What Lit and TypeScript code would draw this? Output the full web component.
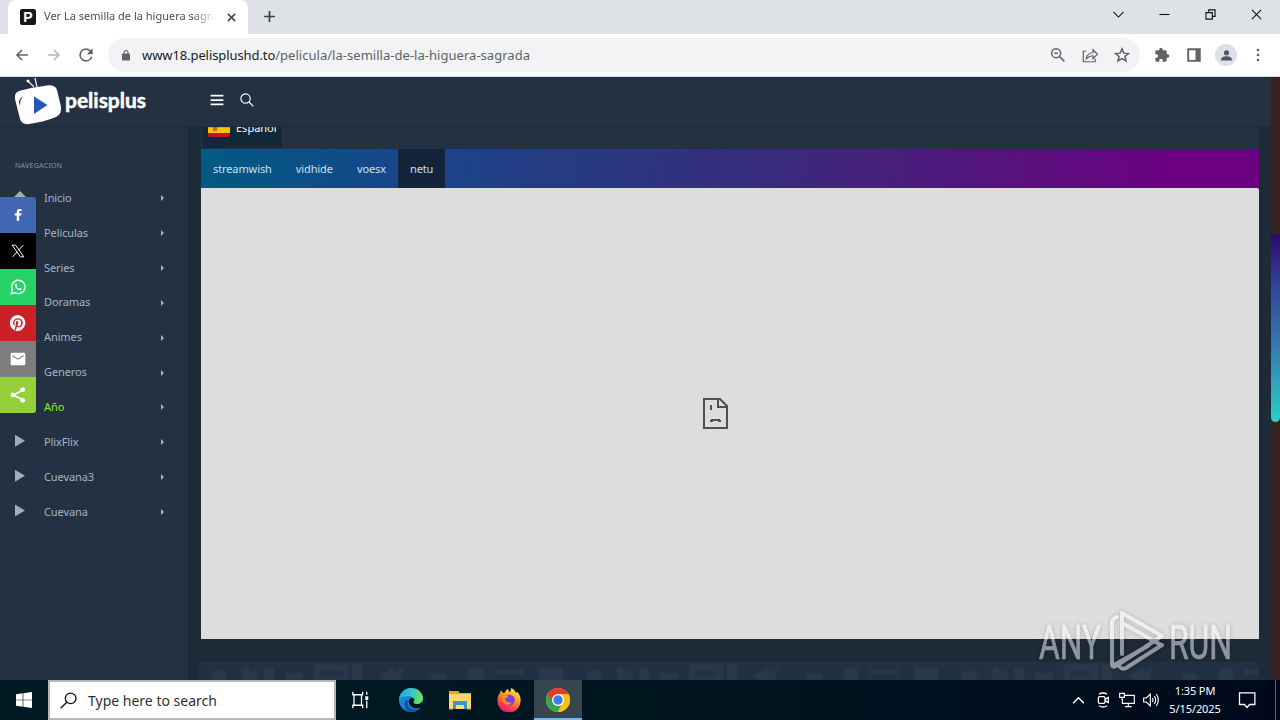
import { LitElement, css, html, svg } from 'lit';
import { customElement, property } from 'lit/decorators.js';
import { classMap } from 'lit/directives/class-map.js';

const ICONS = {
  back: svg`<path d="M21 12H5M12 4.500L4.500 12l7.500 7.500" fill="none" stroke="currentColor" stroke-width="2.300"/>`,
  forward: svg`<path d="M3 12h16M12 4.500l7.500 7.500-7.500 7.500" fill="none" stroke="currentColor" stroke-width="2.300"/>`,
  reload: svg`<path d="M17.650 6.350A7.950 7.950 0 0 0 12 4a8 8 0 1 0 7.730 10h-2.080A6 6 0 1 1 12 6c1.660 0 3.140.69 4.220 1.780L13 11h7V4z"/>`,
  lock: svg`<path d="M18 8h-1V6A5 5 0 0 0 7 6v2H6a2 2 0 0 0-2 2v10c0 1.100.9 2 2 2h12a2 2 0 0 0 2-2V10a2 2 0 0 0-2-2zM9 6a3 3 0 0 1 6 0v2H9z"/>`,
  close: svg`<path d="M4 4l16 16M20 4L4 20" fill="none" stroke="currentColor" stroke-width="3.400"/>`,
  plus: svg`<path d="M12 2v20M2 12h20" fill="none" stroke="currentColor" stroke-width="3.200"/>`,
  zoomOut: svg`<g fill="none" stroke="currentColor" stroke-width="2"><circle cx="9.500" cy="9.500" r="6"/><path d="M14 14l6.500 6.500M7 9.500h5"/></g>`,
  share: svg`<path d="M7 7H3v14h16v-4M7 17c1-6 4-8 9-8V5l6 6-6 6v-4c-4 0-6 1-9 4z" fill="none" stroke="currentColor" stroke-width="1.600"/>`,
  star: svg`<path d="M12 3.800l2.400 5.700 6.200.5-4.700 4 1.500 6L12 16.800 6.600 20l1.500-6-4.700-4 6.200-.5z" fill="none" stroke="currentColor" stroke-width="2"/>`,
  puzzle: svg`<path d="M20.500 11H19V7a2 2 0 0 0-2-2h-4V3.500a2.500 2.500 0 0 0-5 0V5H4a2 2 0 0 0-2 2v3.800h1.500a2.700 2.700 0 0 1 0 5.400H2V20c0 1.100.9 2 2 2h3.800v-1.500a2.700 2.700 0 0 1 5.400 0V22H17a2 2 0 0 0 2-2v-4h1.500a2.500 2.500 0 0 0 0-5z"/>`,
  panel: svg`<path d="M3 3h18v18H3zM5.500 5.500v13H14v-13z" fill-rule="evenodd"/>`,
  person: svg`<circle cx="12" cy="7" r="4.800"/><path d="M2 20c0-5 5-6.500 10-6.500s10 1.500 10 6.500v1H2z"/>`,
  dots: svg`<circle cx="12" cy="4.500" r="2"/><circle cx="12" cy="12" r="2"/><circle cx="12" cy="19.500" r="2"/>`,
  chevronDown: svg`<path d="M1 6.500l11 11 11-11" fill="none" stroke="currentColor" stroke-width="2.200"/>`,
  chevronUp: svg`<path d="M2 17l10-10 10 10" fill="none" stroke="currentColor" stroke-width="2.600"/>`,
  minimize: svg`<path d="M1 12h22" stroke="currentColor" stroke-width="2.400"/>`,
  restore: svg`<path d="M2 8h14v14H2zM8 8V2h14v14h-6" fill="none" stroke="currentColor" stroke-width="2.400"/>`,
  exit: svg`<path d="M2 2l20 20M22 2L2 22" fill="none" stroke="currentColor" stroke-width="2.400"/>`,
  menu: svg`<path d="M1 4.500h22M1 12h22M1 19.500h22" stroke="currentColor" stroke-width="3"/>`,
  search: svg`<g fill="none" stroke="currentColor" stroke-width="1.900"><circle cx="9.500" cy="9.500" r="8"/><path d="M15 15l8 8"/></g>`,
  find: svg`<g fill="none" stroke="currentColor" stroke-width="1.900"><circle cx="15" cy="9" r="7.500"/><path d="M9.500 14.500L1 23"/></g>`,
  facebook: svg`<path d="M14 22v-9h3.300l.6-3.800H14V7c0-1.300.5-2 2.100-2H18V1.700C17.300 1.600 16.300 1.500 15 1.500c-3.300 0-5.200 1.900-5.200 5.200v2.500H6.500V13h3.300v9z"/>`,
  x: svg`<path d="M2 2h5.800l14.200 20h-5.800zM21 2l-8.300 8.900M10.500 13.500L3 22" fill="none" stroke="currentColor" stroke-width="1.700"/>`,
  whatsapp: svg`<path d="M2 22l1.600-5.600A10 10 0 1 1 7.500 20.500z" fill="none" stroke="currentColor" stroke-width="2.100"/><path d="M8.400 6.800c-.7.300-1.600 1.300-1.300 2.900.5 3 4 6.700 7.500 7.200 1.500.2 2.700-.8 2.900-2.300l-2.800-1.500-1.300 1.400c-1.800-.7-3-1.900-3.800-3.600l1-1.200-1.200-2.900z"/>`,
  pinterest: svg`<path d="M12 0A12 12 0 0 0 7.600 23.200c-.1-1-.2-2.500 0-3.600l1.400-6s-.3-.7-.3-1.700c0-1.700 1-2.900 2.200-2.900 1 0 1.500.8 1.500 1.700 0 1.100-.7 2.600-1 4.100-.3 1.200.6 2.200 1.800 2.200 2.100 0 3.700-2.200 3.700-5.500 0-2.900-2-4.900-5-4.900-3.400 0-5.400 2.600-5.400 5.200 0 1 .4 2.100.9 2.700l-.3 1.500c-1.700-.8-2.500-2.600-2.500-4.300 0-3.500 2.500-6.800 7.500-6.800 4 0 7.100 2.900 7.100 6.600 0 4-2.500 7.200-6.100 7.200-1.200 0-2.300-.6-2.700-1.400l-.9 3c-.2 1-.9 2.400-1.400 3.300A12 12 0 1 0 12 0z"/>`,
  mail: svg`<path fill-rule="evenodd" d="M3 2.500h18a2 2 0 0 1 2 2v15a2 2 0 0 1-2 2H3a2 2 0 0 1-2-2v-15a2 2 0 0 1 2-2zM3.500 6v2L12 13.300 20.500 8V6L12 11.300z"/>`,
  shareNodes: svg`<path d="M19 5L5 12l14 7" fill="none" stroke="currentColor" stroke-width="2.400"/><circle cx="19" cy="4" r="3.600"/><circle cx="4.500" cy="12" r="3.600"/><circle cx="19" cy="20" r="3.600"/>`,
  windows: svg`<path d="M0 3.500L10 2v9.500H0zM11 1.900L24 0v11.500H11zM0 12.500h10V22L0 20.500zM11 12.500h13V24l-13-1.900z"/>`,
  taskView: svg`<path d="M2.500 1v4h13V1M2.500 23v-4h13v4M4 5v14M14 5v14M21 1v4M21 13v10" fill="none" stroke="currentColor" stroke-width="1.700"/><path d="M19 7h4v5h-4z"/>`,
  meet: svg`<g fill="none" stroke="currentColor" stroke-width="1.900"><rect x="5" y="7" width="10" height="10" rx="2"/><path d="M15 11l5-3v8l-5-3M6 3.500Q12-.5 18 3.500M6 20.500q6 4 12 0"/></g>`,
  network: svg`<g fill="none" stroke="currentColor" stroke-width="1.700"><path d="M9 5h14v12H5v-6M14 17v5M9 22h10M1 2h7v6H1zM4.500 8v4"/></g>`,
  volume: svg`<g fill="none" stroke="currentColor" stroke-width="1.700"><path d="M1 9h4l6-6v18l-6-6H1zM14 9q2 3 0 6M17 6q4 6 0 12M20 3q6 9 0 18"/></g>`,
  notice: svg`<path d="M2 2.500h20.500v15.500h-7l-3.500 4-3.500-4H2z" fill="none" stroke="currentColor" stroke-width="1.700"/>`,
  edge: svg`
    <defs>
      <linearGradient id="a" x1="0" y1="0" x2="1" y2="0.3"><stop offset="0" stop-color="#249fdc"/><stop offset=".55" stop-color="#35c5c9"/><stop offset="1" stop-color="#69dc61"/></linearGradient>
      <linearGradient id="b" x1="0" y1="0" x2="0" y2="1"><stop offset="0" stop-color="#1a8bdd"/><stop offset="1" stop-color="#1e7fd0"/></linearGradient>
    </defs>
    <circle cx="12" cy="12" r="12" fill="url(#b)"/>
    <path d="M9 12c-2 5 2 10 8 9.500 2-.2 4-1 5-2.500-2 4-6 5-10 5C6 24 4 17 7 12z" fill="#1452a0"/>
    <path d="M13 10c-4 0-4 5-1.500 8 3 3 8 3 11 .8L24 12z" fill="#001722"/>
    <path d="M0 11C1 4.500 6 0 12 0c7 0 12 5 12 10 0 4-3 6-6 6-2.500 0-4-1-3.500-2 2-2 .5-6-4-6C6 8 2 9 0 11z" fill="url(#a)"/>`,
  folder: svg`
    <path d="M1 3h9l2 2h11v3H1z" fill="#e9a321"/><path d="M1 6h22v15H1z" fill="#ffd76c"/>
    <path d="M5 13h14v8h-3v-4H8v4H5z" fill="#3a94d0"/><path d="M1 20h4v1.500H1zM19 20h4v1.500h-4z" fill="#e9b94a"/>`,
  firefox: svg`
    <defs><linearGradient id="f" x1=".8" y1="0" x2=".3" y2="1"><stop offset="0" stop-color="#fff34a"/><stop offset=".4" stop-color="#ff9a20"/><stop offset=".75" stop-color="#ff3c49"/><stop offset="1" stop-color="#e2127f"/></linearGradient></defs>
    <path d="M3 5l1-3 2 3 2-.5C8.500 2.500 9.500 1.500 11 1l1 3c1 0 2-.5 2-4 3 1 4.500 3.500 5 5l1.500-1C23 7 24 10 23.500 13A11.500 11.500 0 0 1 .5 13C.4 10 1 7 3 5z" fill="url(#f)"/>
    <circle cx="12.500" cy="12" r="5.300" fill="#7a3fe0"/><path d="M5 8c2-1.500 5-.5 6.500 1l-3.500 1.500c0 3 3 5 7 3.500-2 4-8.500 3.500-10-1z" fill="#ff8a22"/>`,
  chrome: svg`
    <circle cx="12" cy="12" r="12" fill="#fbc116"/>
    <path d="M12 12L1.610 6A12 12 0 0 0 12 24l5.200-9z" fill="#2da94f"/>
    <path d="M12 12L6.800 15 1.610 6A12 12 0 0 1 22.390 6H12z" fill="#e33b2e"/>
    <path d="M12 12h5.200L12 24a12 12 0 0 0 10.390-18H12z" fill="#fbc116"/>
    <circle cx="12" cy="12" r="6" fill="#fff"/><circle cx="12" cy="12" r="4.700" fill="#3b7ded"/>`,
};

type IconName = keyof typeof ICONS;

@customElement('ui-icon')
export class UiIcon extends LitElement {
  static styles = css`
    :host {
      display: block;
      flex: none;
      width: 16px;
      height: 16px;
    }
    svg {
      display: block;
      width: 100%;
      height: 100%;
      fill: currentColor;
    }
  `;

  @property() name: IconName = 'menu';

  render() {
    return html`<svg viewBox="0 0 24 24">${ICONS[this.name]}</svg>`;
  }
}

@customElement('browser-bar')
export class BrowserBar extends LitElement {
  static styles = css`
    :host {
      display: block;
      height: 77px;
      font-family: 'Noto Sans', 'Open Sans', sans-serif;
      color: #5f6368;
    }
    .tabs {
      display: flex;
      height: 34px;
      background: #dee1e6;
      padding-left: 8px;
    }
    .tab {
      display: flex;
      align-items: center;
      width: 240px;
      box-sizing: border-box;
      padding: 0 11px 0 12px;
      border-radius: 8px 8px 0 0;
      background: #fff;
    }
    .favicon {
      width: 16px;
      height: 16px;
      border-radius: 2px;
      background: #171717;
      color: #fff;
      font: bold 14px/16px 'Liberation Sans', sans-serif;
      text-align: center;
    }
    .title {
      flex: 1;
      margin: 0 10px 0 8px;
      overflow: hidden;
      white-space: nowrap;
      font-size: 11px;
      line-height: 18px;
      margin-top: -2px;
      color: #4a4d50;
      mask-image: linear-gradient(to right, #000 86%, transparent);
    }
    .close {
      width: 11px;
      height: 11px;
      color: #45494d;
    }
    .new {
      width: 13px;
      height: 13px;
      margin: 10px 0 0 15px;
      color: #3c4043;
    }
    .window {
      display: flex;
      align-items: center;
      height: 28px;
      margin-left: auto;
      color: #111;
    }
    .window ui-icon {
      width: 11px;
      height: 11px;
      margin-right: 35px;
    }
    .window ui-icon:last-child {
      margin-right: 18px;
    }
    .toolbar {
      display: flex;
      align-items: center;
      height: 42px;
      background: #fff;
      border-bottom: 1px solid #dadce0;
      padding: 0 14px;
    }
    .nav {
      width: 16px;
      height: 16px;
      margin-right: 16px;
    }
    .reload {
      width: 20px;
      height: 20px;
      margin: 0 12px 0 -2px;
    }
    .muted {
      color: #b5b7ba;
    }
    .address {
      display: flex;
      flex: 1;
      align-items: center;
      height: 34px;
      border-radius: 17px;
      background: #f1f3f4;
      padding: 0 9px 0 12px;
    }
    .lock {
      width: 12px;
      height: 13px;
    }
    .url {
      flex: 1;
      margin-left: 10px;
      font-size: 13px;
      letter-spacing: 0.03px;
      white-space: nowrap;
    }
    .host {
      color: #202124;
      letter-spacing: -0.09px;
    }
    .address .action {
      width: 18px;
      height: 18px;
      margin-left: 14px;
    }
    .tool {
      width: 16px;
      height: 16px;
      margin-left: 14px;
    }
    .panel {
      width: 18px;
      height: 18px;
      margin-left: 15px;
    }
    .avatar {
      display: grid;
      place-items: center;
      width: 22px;
      height: 22px;
      margin: 0 13px 0 12px;
      border-radius: 50%;
      background: #dde0e8;
      color: #50566e;
    }
    .avatar ui-icon {
      width: 13px;
      height: 13px;
    }
  `;

  render() {
    return html`
      <div class="tabs">
        <div class="tab">
          <span class="favicon">P</span>
          <span class="title">Ver La semilla de la higuera sagrada</span>
          <ui-icon class="close" name="close"></ui-icon>
        </div>
        <ui-icon class="new" name="plus"></ui-icon>
        <div class="window">
          <ui-icon name="chevronDown"></ui-icon>
          <ui-icon name="minimize"></ui-icon>
          <ui-icon name="restore"></ui-icon>
          <ui-icon name="exit"></ui-icon>
        </div>
      </div>
      <div class="toolbar">
        <ui-icon class="nav" name="back"></ui-icon>
        <ui-icon class="nav muted" name="forward"></ui-icon>
        <ui-icon class="reload" name="reload"></ui-icon>
        <div class="address">
          <ui-icon class="lock" name="lock"></ui-icon>
          <span class="url"><span class="host">www18.pelisplushd.to</span>/pelicula/la-semilla-de-la-higuera-sagrada</span>
          <ui-icon class="action" name="zoomOut"></ui-icon>
          <ui-icon class="action" name="share"></ui-icon>
          <ui-icon class="action" name="star"></ui-icon>
        </div>
        <ui-icon class="tool" name="puzzle"></ui-icon>
        <ui-icon class="panel" name="panel"></ui-icon>
        <span class="avatar"><ui-icon name="person"></ui-icon></span>
        <ui-icon name="dots"></ui-icon>
      </div>
    `;
  }
}

const MENU = ['Inicio', 'Peliculas', 'Series', 'Doramas', 'Animes', 'Generos', 'Año', 'PlixFlix', 'Cuevana3', 'Cuevana'];

const SHARES: IconName[] = ['facebook', 'x', 'whatsapp', 'pinterest', 'mail', 'shareNodes'];

const SERVERS = ['streamwish', 'vidhide', 'voesx', 'netu'];

@customElement('movie-page')
export class MoviePage extends LitElement {
  static styles = css`
    :host {
      display: grid;
      grid-template: 49px 1fr / 189px 1fr 9px;
      height: 603px;
      overflow: hidden;
      position: relative;
      background: #1d2a38;
      font-family: 'Noto Sans', 'Open Sans', sans-serif;
      font-size: 11px;
    }
    header {
      grid-column: 1 / 3;
      display: flex;
      align-items: flex-start;
      background: #233143;
      color: #fff;
      z-index: 1;
      box-shadow: 0 1px 1px #1f2c3b;
    }
    .logo {
      width: 150px;
      height: 49px;
      margin-left: 10px;
    }
    .wordmark {
      font: bold 21px 'Lato', sans-serif;
    }
    .burger {
      width: 14px;
      height: 14px;
      margin: 16px 0 0 50px;
    }
    .lens {
      width: 14px;
      height: 14px;
      margin: 16px 0 0 16px;
    }
    .scroll {
      grid-area: 1 / 3 / 3 / 4;
      background: #38221f;
      padding-top: 157px;
    }
    .thumb {
      height: 188px;
      border-radius: 0 0 5px 5px;
      background: linear-gradient(#2a0a70, #36489a 30%, #357aae 60%, #2bd0c4);
    }
    nav {
      background: #233143;
      border-right: 1px solid #182a35;
      color: #a5b5c4;
    }
    .heading {
      height: 14px;
      margin: 33px 0 0 15px;
      font-size: 7px;
      line-height: 14px;
      letter-spacing: 0.28px;
      color: #8796a6;
    }
    .menu {
      padding-top: 8px;
    }
    .item {
      display: flex;
      align-items: center;
      height: 34.85px;
      padding: 0 24px 0 15px;
    }
    .item span {
      flex: 1;
      margin: -2px 0 0 19px;
      letter-spacing: -0.1px;
    }
    .item.active span {
      color: #7bf32a;
    }
    .glyph {
      width: 10px;
      height: 12px;
      margin-top: -3px;
      background: #9faebb;
      clip-path: polygon(0 0, 100% 50%, 0 100%);
    }
    .glyph.home {
      margin-left: -1px;
      width: 12px;
      margin-right: -1px;
      clip-path: polygon(50% 0, 100% 50%, 0 50%);
    }
    .arrow {
      border: 3px solid transparent;
      border-left: 3px solid #a5b5c4;
      border-right: 0;
    }
    .share {
      position: absolute;
      left: 0;
      top: 120px;
      width: 36px;
      border-radius: 0 3px 3px 0;
      overflow: hidden;
      color: #fff;
    }
    .share div {
      display: grid;
      place-items: center;
      height: 36px;
    }
    .facebook { background: #4267b2; }
    .x { background: #000; }
    .whatsapp { background: #25d366; }
    .pinterest { background: #cb2027; }
    .mail { background: #7d7d7d; }
    .shareNodes { background: #95d03a; }
    .share .facebook ui-icon,
    .share .x ui-icon {
      width: 14px;
      height: 14px;
    }
    main {
      display: flex;
      flex-direction: column;
      padding: 0 12px;
      min-width: 0;
    }
    .languages {
      height: 23px;
      background: #233143;
    }
    .language {
      display: flex;
      width: 80px;
      height: 22px;
      margin-left: 1px;
      background: #102838;
      color: #fff;
      border-radius: 0 0 2px 2px;
    }
    .flag {
      width: 22px;
      height: 17px;
      margin: -6px 6px 0;
      border-radius: 2px;
    }
    .language span {
      line-height: 16px;
      margin-top: -6px;
    }
    .servers {
      display: flex;
      height: 39px;
      background: linear-gradient(100deg, #005b82, #16478a 18%, #3a2a7c 55%, #6c0080 92%);
      color: #c8e0ee;
    }
    .server {
      display: grid;
      place-items: center;
      padding: 0 12px 1px;
      letter-spacing: -0.1px;
    }
    .server.active {
      background: #13233a;
    }
    .player {
      display: grid;
      place-items: center;
      height: 451px;
      background: #ddd;
      border-radius: 0 2px 0 0;
    }
    .sad {
      width: 28px;
      height: 34px;
      margin-left: -30px;
    }
    .posters {
      height: 18px;
      margin: 23px 0 0 -2px;
      background: #223043;
    }
    .posters svg {
      display: block;
      width: 1060px;
      height: 18px;
      filter: blur(0.8px);
    }
  `;

  render() {
    return html`
      <header>
        <svg class="logo" viewBox="10 77 150 49">
          <path d="M37 87l-2-9M34 87l-6-6" stroke="#e4edf3" stroke-width="1.300"/>
          <circle cx="28" cy="81" r="1.500" fill="#fff"/>
          <path d="M19 91q15-4 28-5.500 8-1 10 4.500l4 17q1 7-5 10-12 5-27 7-7 1-9-5l-5-20q-1-6 4-8z" fill="#fff"/>
          <path d="M23 96q-6 4-3 10 0-6 3-10z" fill="#3c4a5b"/>
          <path d="M34 96.500V114L47.500 105z" fill="#2757b5"/>
          <text class="wordmark" x="65" y="108" fill="#fff" stroke="#fff" stroke-width=".5" textLength="81" lengthAdjust="spacingAndGlyphs">pelisplus</text>
        </svg>
        <ui-icon class="burger" name="menu"></ui-icon>
        <ui-icon class="lens" name="search"></ui-icon>
      </header>
      <div class="scroll"><div class="thumb"></div></div>
      <nav>
        <div class="heading">NAVEGACION</div>
        <div class="menu">
          ${MENU.map(
            (label, i) => html`
              <div class=${classMap({ item: true, active: label === 'Año' })}>
                <i class=${classMap({ glyph: true, home: i === 0 })}></i>
                <span>${label}</span>
                <i class="arrow"></i>
              </div>
            `
          )}
        </div>
      </nav>
      <main>
        <div class="languages">
          <div class="language">
            <svg class="flag" viewBox="0 0 22 17">
              <path fill="#c8102e" d="M0 0h22v17H0z"/>
              <path fill="#ffc400" d="M0 4h22v9H0z"/>
              <path fill="#c4652f" d="M5 6h4v5H5z"/>
            </svg>
            <span>Español</span>
          </div>
        </div>
        <div class="servers">
          ${SERVERS.map(
            (s) => html`<div class=${classMap({ server: true, active: s === 'netu' })}>${s}</div>`
          )}
        </div>
        <div class="player">
          <svg class="sad" viewBox="0 0 28 34">
            <g fill="none" stroke="#505050" stroke-width="2">
              <path d="M3 2h16l7 7v22H3zM17 2v8h9"/>
              <path d="M10 8v5M9 24h2v-1h7v1h2"/>
            </g>
          </svg>
        </div>
        <div class="posters">
          <svg viewBox="0 0 1060 18">
            <defs>
              <pattern id="p" width="375" height="18" patternUnits="userSpaceOnUse">
                <g fill="#36465a" opacity=".4">
                  <circle cx="20" cy="16" r="8"/><path d="M42 8l6-4 4 8 5-5 3 11H44zM65 6h10v12H65zM86 11h18v7H86z"/>
                  <path d="M115 2h35v16h-35zM153 2h10v16h-10z"/><path d="M180 14l12-8 5 4 8-6-4 14h-18zM232 12h16v6h-16z"/>
                  <circle cx="277" cy="13" r="8"/><path d="M295 8h30v4h-30zM340 5h24v13h-24z"/>
                </g>
                <path d="M120 8h24v7h-24z" fill="#1f2d3f" opacity=".5"/>
              </pattern>
            </defs>
            <path d="M0 0h1060v18H0z" fill="url(#p)"/>
          </svg>
        </div>
      </main>
      <div class="share">
        ${SHARES.map((name) => html`<div class=${name}><ui-icon name=${name}></ui-icon></div>`)}
      </div>
    `;
  }
}

@customElement('task-bar')
export class TaskBar extends LitElement {
  static styles = css`
    :host {
      display: flex;
      height: 40px;
      background: linear-gradient(to right, #001b24, #001520 60%, #00091b);
      color: #fff;
      font-family: 'Noto Sans', 'Open Sans', sans-serif;
    }
    .start {
      margin: 12px 16px;
    }
    .search {
      display: flex;
      align-items: center;
      box-sizing: border-box;
      width: 288px;
      border: 2px solid #b6b6b6;
      background: #fff;
      color: #303030;
      padding-left: 10px;
      font-size: 14px;
    }
    .search ui-icon {
      width: 17px;
      height: 17px;
      margin-right: 11px;
      color: #111;
    }
    .view {
      width: 18px;
      height: 18px;
      margin: 11px 18px 0 15px;
    }
    .app {
      display: grid;
      place-items: center;
      width: 48px;
      margin-right: 1px;
    }
    .app ui-icon {
      width: 24px;
      height: 24px;
    }
    .app.active {
      box-sizing: border-box;
      background: #35464e;
      border-bottom: 2px solid #76b9ed;
      padding-top: 2px;
    }
    .tray {
      display: flex;
      align-items: center;
      margin-left: auto;
    }
    .up {
      width: 13px;
      height: 13px;
      margin-right: 10px;
    }
    .status {
      margin-right: 8px;
    }
    .clock {
      width: 56px;
      font-size: 11px;
      line-height: 18px;
      padding-bottom: 1px;
      text-align: center;
      white-space: nowrap;
      letter-spacing: -0.1px;
      margin-right: 15px;
    }
    .notice {
      width: 18px;
      height: 18px;
      margin-right: 19px;
    }
    .desktop {
      width: 4px;
      height: 40px;
      border-left: 1px solid #59616d;
    }
  `;

  render() {
    const apps: IconName[] = ['edge', 'folder', 'firefox', 'chrome'];
    return html`
      <ui-icon class="start" name="windows"></ui-icon>
      <div class="search"><ui-icon name="find"></ui-icon>Type here to search</div>
      <ui-icon class="view" name="taskView"></ui-icon>
      ${apps.map(
        (name) => html`<div class=${classMap({ app: true, active: name === 'chrome' })}><ui-icon name=${name}></ui-icon></div>`
      )}
      <div class="tray">
        <ui-icon class="up" name="chevronUp"></ui-icon>
        <ui-icon class="status" name="meet"></ui-icon>
        <ui-icon class="status" name="network"></ui-icon>
        <ui-icon class="status" name="volume"></ui-icon>
        <div class="clock">1:35 PM<br />5/15/2025</div>
        <ui-icon class="notice" name="notice"></ui-icon>
        <div class="desktop"></div>
      </div>
    `;
  }
}

@customElement('app-root')
export class AppRoot extends LitElement {
  static styles = css`
    :host {
      display: block;
      position: relative;
      width: 1280px;
      height: 720px;
      overflow: hidden;
    }
    .watermark {
      position: absolute;
      left: 1036px;
      top: 606px;
      width: 210px;
      height: 70px;
      filter: drop-shadow(0 0 2px rgba(0, 0, 0, 0.4));
      opacity: 0.5;
    }
    .watermark text {
      font: 49px 'Roboto', sans-serif;
      fill: #fff;
      stroke: #fff;
      stroke-width: 0.7px;
    }
  `;

  render() {
    return html`
      <browser-bar></browser-bar>
      <movie-page></movie-page>
      <task-bar></task-bar>
      <svg class="watermark" viewBox="0 0 210 70">
        <text x="3" y="53" textLength="62" lengthAdjust="spacingAndGlyphs">ANY</text>
        <text x="133" y="53" textLength="63" lengthAdjust="spacingAndGlyphs">RUN</text>
        <g fill="none" stroke="#fff" stroke-width="4" stroke-linejoin="round" stroke-linecap="round">
          <path d="M86 48V7l40 23-46 30q-4 2-4-2V17q0-5 5-6"/>
          <path d="M86 17l39 22M112 40L78 59M126 39L90 62q-4 2-6-1"/>
        </g>
      </svg>
    `;
  }
}
